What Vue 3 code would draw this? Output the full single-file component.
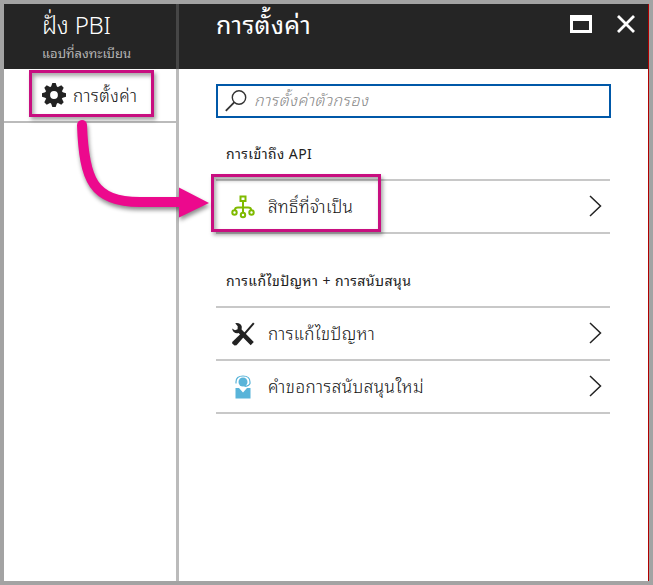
<script setup>
const support = [
  { icon: 'tools', label: 'การแก้ไขปัญหา' },
  { icon: 'person', label: 'คำขอการสนับสนุนใหม่' },
]
</script>

<template>
  <div class="frame">
    <aside class="app-pane">
      <header class="head app-head">
        <h1 class="title"><span class="app-title">ฝั่ง PBI</span></h1>
        <p class="subtitle"><span>แอปที่ลงทะเบียน</span></p>
      </header>
      <div class="command">
        <svg class="gear" width="24" height="24" viewBox="-12 -12 24 24">
          <circle r="6.4" fill="none" stroke="#222" stroke-width="5" />
          <g fill="#222">
            <path v-for="a in 8" :key="a" d="M-3 -8 L-1.7 -12 H1.7 L3 -8Z" :transform="`rotate(${a * 45})`" />
          </g>
        </svg>
        <span class="command-label">การตั้งค่า</span>
      </div>
    </aside>
    <main class="settings-pane">
      <header class="head settings-head">
        <h2 class="title"><span class="settings-title">การตั้งค่า</span></h2>
        <div class="window-actions">
          <svg width="22" height="18" viewBox="0 0 22 18"><path fill="#fff" fill-rule="evenodd" d="M0 0H22V18H0ZM3 6V15H19V6Z" /></svg>
          <svg width="18" height="18" viewBox="0 0 18 18"><path d="M1 1 17 17M17 1 1 17" stroke="#fff" stroke-width="2.8" /></svg>
        </div>
      </header>
      <div class="content">
        <div class="search">
          <svg width="22" height="22" viewBox="0 0 22 22" fill="none" stroke="#333"><circle cx="14" cy="7.5" r="6.7" stroke-width="1.4" /><path d="M9.2 12.4 .8 20.8" stroke-width="1.8" /></svg>
          <span class="placeholder">การตั้งค่าตัวกรอง</span>
        </div>
        <h3 class="section api"><span>การเข้าถึง API</span></h3>
        <ul class="list">
          <li class="row">
            <svg class="icon" width="24" height="24" viewBox="0 0 24 24" fill="none" stroke="#7fba00" stroke-width="2">
              <path d="M9.500 1.500H14.500V6H9.500ZM12 6V18M4 16V14.500Q4 12.500 7 12.500H17Q20 12.500 20 14.500V16" />
              <circle cx="3.500" cy="17.500" r="2.200" /><circle cx="12" cy="20" r="2.200" /><circle cx="20.500" cy="17.500" r="2.200" />
            </svg>
            <span class="label permissions">สิทธิ์ที่จำเป็น</span>
            <svg class="chevron" width="13" height="22" viewBox="0 0 13 22"><path d="M1 1 11.500 11 1 21" fill="none" stroke="#222" stroke-width="1.500" /></svg>
          </li>
        </ul>
        <h3 class="section help"><span>การแก้ไขปัญหา + การสนับสนุน</span></h3>
        <ul class="list">
          <li v-for="item in support" :key="item.icon" class="row">
            <svg v-if="item.icon === 'tools'" class="icon" width="24" height="24" viewBox="0 0 24 24">
              <path d="M22.800 1.200 12.500 13" stroke="#222" stroke-width="2" />
              <path d="M10 11.500 13.200 14.500 5.500 23.200 3.500 23.500 1.200 21.500V20Z" fill="#222" />
              <path d="M4.200 1.200Q9.500 .3 10.800 4.800L10.600 7.500 22.800 20 19.700 23.200 7.600 11Q2.500 12.200 1 6.500L4 8.300 6.600 7.200 6.700 4.200Z" fill="#222" />
            </svg>
            <svg v-else class="icon" width="24" height="24" viewBox="0 0 24 24">
              <path d="M5 8.500V7Q5 1 12 1T19 7V8.500Q18 11 13.500 11.500" fill="none" stroke="#59b4d9" stroke-width="1.200" />
              <circle cx="12" cy="7" r="4.500" fill="#59b4d9" />
              <path d="M4.500 13H8L12 17.500 16 13H19.500V23.500H4.500Z" fill="#59b4d9" />
            </svg>
            <span class="label" :class="item.icon">{{ item.label }}</span>
            <svg class="chevron" width="13" height="22" viewBox="0 0 13 22"><path d="M1 1 11.500 11 1 21" fill="none" stroke="#222" stroke-width="1.500" /></svg>
          </li>
        </ul>
      </div>
    </main>
    <div class="callout first"></div>
    <div class="callout second"></div>
    <svg class="arrow" width="150" height="120" viewBox="70 110 150 120">
      <path d="M82 125C84 180 93 202 140 202H182" fill="none" stroke="#ec098d" stroke-width="10" stroke-linecap="round" />
      <path d="M179 187.500 209 203 179 217.500Z" fill="#ec098d" />
    </svg>
  </div>
</template>

<style>
body { margin: 0; }
</style>

<style scoped>
.frame { position: relative; box-sizing: border-box; width: 653px; height: 585px; border: 4px solid #a3a3a3; display: grid; grid-template-columns: 175px 1fr; background: #fff; color: #111; font-family: "Noto Sans Thai Looped", "Noto Sans", sans-serif; overflow: hidden; }
h1, h2, h3, p, ul { margin: 0; padding: 0; font-weight: 400; }
span { white-space: nowrap; }
.app-pane { border-right: 3px solid #bbb; }
.head { height: 65px; background: #252525; box-sizing: border-box; color: #fff; }
.app-head { padding-left: 38px; margin-right: -3px; border-right: 3px solid #464646; }
.title { font-size: 24px; line-height: 38px; height: 38px; font-weight: 300; }
.app-title { letter-spacing: -.2px; }
.settings-title { font-size: 25px; letter-spacing: .4px; font-weight: 400; }
.subtitle { font-size: 13px; line-height: 22px; color: #b5b5b5; }
.command { height: 52px; border-bottom: 2px solid #bbb; display: flex; align-items: center; padding-left: 38px; gap: 7px; }
.command-label { font-size: 17px; letter-spacing: .5px; font-weight: 300; line-height: 26px; }
.settings-pane { border-right: 1px solid #b00000; }
.settings-head { display: flex; justify-content: space-between; padding: 0 13px 0 37px; }
.window-actions { display: flex; gap: 25px; padding-top: 11px; }
.content { padding: 15px 37px 0; }
.search { box-sizing: border-box; width: 395px; height: 34px; border: 2px solid #0058a8; display: flex; align-items: center; padding-left: 7px; gap: 7px; }
.placeholder { font-size: 16px; letter-spacing: .45px; line-height: 24px; margin-bottom: 4px; font-style: italic; font-weight: 300; color: #888; }
.section { font-size: 14px; letter-spacing: .45px; line-height: 24px; padding-left: 10px; }
.section span { font-weight: 400; color: #222; }
.api { height: 38px; padding-top: 23px; }
.help { height: 38px; padding-top: 34px; }
.list { list-style: none; width: 394px; border-top: 2px solid #c8c8c8; }
.row { height: 51px; border-bottom: 2px solid #c8c8c8; display: flex; align-items: center; padding: 0 8px 0 15px; }
.label { margin-left: 13px; font-size: 17px; letter-spacing: .35px; font-weight: 300; line-height: 26px; flex: 1; margin-bottom: 2px; }
.person { letter-spacing: .5px; }
.icon, .chevron { flex: none; }
.chevron { margin-bottom: 2px; }
.callout { position: absolute; box-sizing: border-box; border: 3px solid #c80f80; box-shadow: 2px 3px 4px rgba(0,0,0,.35), inset 2px 3px 4px rgba(0,0,0,.35); }
.first { left: 25px; top: 66px; width: 125px; height: 47px; }
.second { left: 207px; top: 170px; width: 170px; height: 58px; }
.arrow { position: absolute; left: 66px; top: 106px; filter: drop-shadow(1px 3px 2px rgba(0,0,0,.45)); }
</style>
